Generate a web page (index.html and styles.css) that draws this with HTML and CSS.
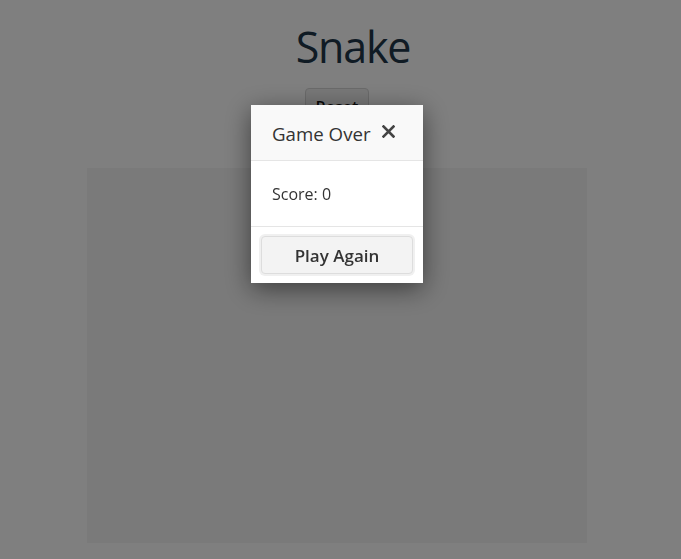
FILE: index.html
```html
<!DOCTYPE html>
<html lang="en">
<head>
<meta charset="utf-8">
<title>Snake</title>
<link rel="stylesheet" href="styles.css">
</head>
<body>
<div class="page">
  <h1 class="title">Snake</h1>
  <div class="controls"><button class="reset-btn">Reset</button></div>
  <div class="board"></div>
</div>
<div class="overlay">
  <div class="modal">
    <div class="modal-header">
      <span class="modal-title">Game Over</span>
      <button class="close-btn" aria-label="Close">
        <svg width="13" height="13" viewBox="0 0 13 13"><path d="M1.5 1.5 L11.5 11.5 M11.5 1.5 L1.5 11.5" stroke="#444" stroke-width="2.6" stroke-linecap="square"/></svg>
      </button>
    </div>
    <div class="modal-body">Score: 0</div>
    <div class="modal-footer"><button class="play-btn">Play Again</button></div>
  </div>
</div>
</body>
</html>
```
FILE: styles.css
```css
html, body { margin: 0; padding: 0; }
body {
  background: #ffffff;
  font-family: "Open Sans", "Noto Sans", sans-serif;
  width: 681px;
  height: 559px;
  overflow: hidden;
}
.page {
  width: 500px;
  margin-left: 87px;
  display: flex;
  flex-direction: column;
  align-items: center;
}
.title {
  margin: 17px 0 0 32px;
  font-size: 43px;
  font-weight: 400;
  line-height: 60px;
  color: #213649;
  letter-spacing: -1.2px;
}
.controls { margin-top: 11px; height: 80px; }
.reset-btn {
  width: 64px;
  height: 36px;
  font-family: inherit;
  font-size: 16px;
  font-weight: 600;
  color: #111;
  background: #f0f0f0;
  border: 1px solid #d6d6d6;
  border-radius: 4px;
  padding-top: 3px;
}
.board {
  width: 500px;
  height: 375px;
  background: #f5f5f5;
}
.overlay {
  position: fixed;
  inset: 0;
  background: rgba(0, 0, 0, 0.5);
  display: flex;
  justify-content: center;
  align-items: flex-start;
}
.modal {
  margin-top: 105px;
  margin-left: -7px;
  width: 172px;
  background: #fff;
  box-shadow: 0 6px 24px rgba(0, 0, 0, 0.5);
}
.modal-header {
  box-sizing: border-box;
  height: 56px;
  background: #f9f9f9;
  border-bottom: 1px solid #e5e5e5;
  display: flex;
  align-items: center;
  padding: 0 21px;
  gap: 12px;
}
.modal-title {
  font-size: 18.7px;
  color: #333;
  padding-top: 2px;
}
.close-btn {
  border: 0;
  background: none;
  padding: 0;
  display: flex;
  margin-top: -2px;
  margin-left: -1px;
}
.modal-body {
  box-sizing: border-box;
  height: 66px;
  padding: 0 21px;
  display: flex;
  align-items: center;
  font-size: 16px;
  color: #333;
  border-bottom: 1px solid #e5e5e5;
}
.modal-footer {
  padding: 9px 10px;
}
.play-btn {
  display: block;
  width: 152px;
  height: 38px;
  font-family: inherit;
  font-size: 17px;
  font-weight: 600;
  color: #333;
  background: #f3f3f3;
  border: 1px solid #ddd;
  border-radius: 4px;
  box-shadow: 0 0 0 2px #f0f0f0;
}
```
